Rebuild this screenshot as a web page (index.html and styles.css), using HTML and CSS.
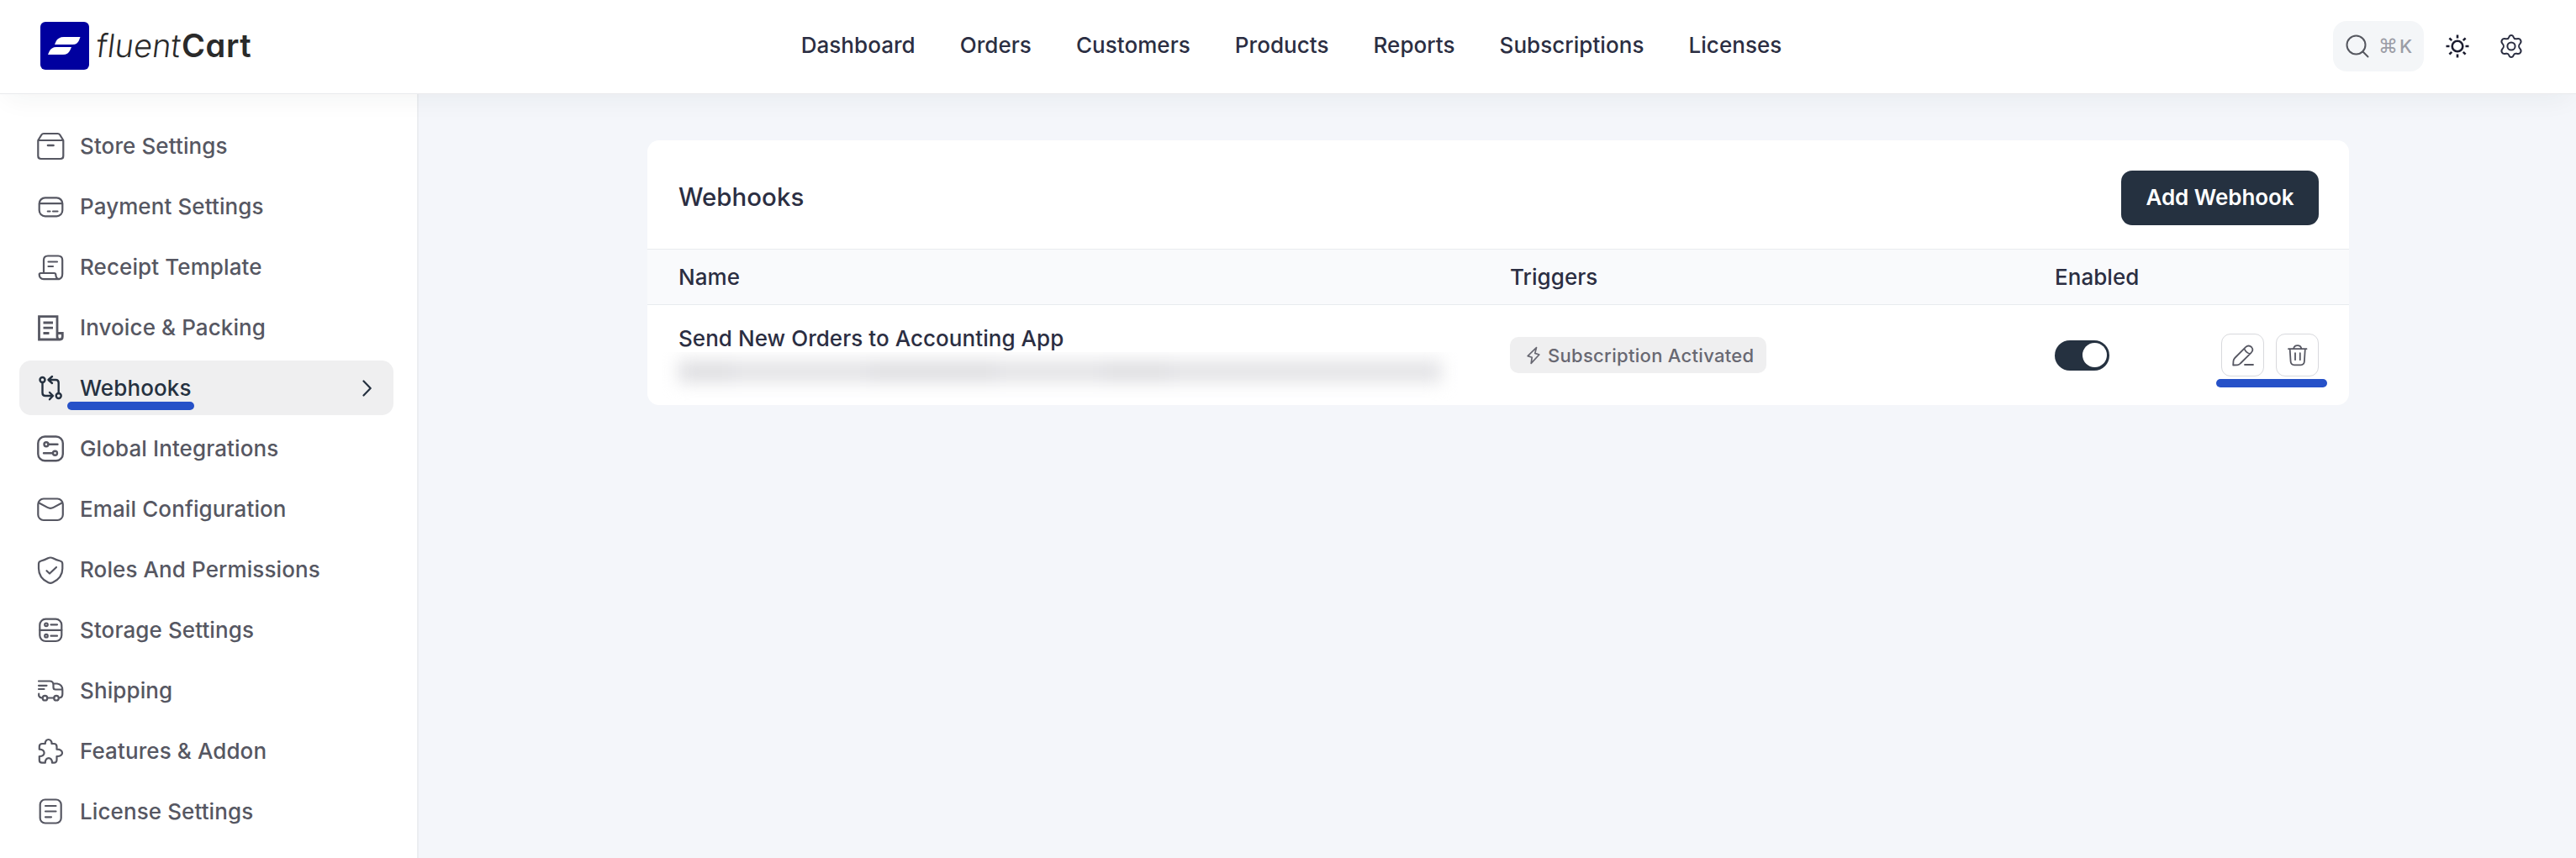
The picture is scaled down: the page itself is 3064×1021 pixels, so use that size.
FILE: index.html
```html
<!DOCTYPE html>
<html lang="en">
<head>
<meta charset="utf-8">
<title>FluentCart – Webhooks</title>
<link rel="stylesheet" href="styles.css">
</head>
<body>
<header class="topbar">
  <a class="logo">
    <svg class="logo-mark" viewBox="0 0 58 57"><rect width="58" height="57" rx="6" fill="#00009f"/><path fill="#fff" d="M28 18H47.500L46 22Q44 27 38.500 27H17L18.500 23.500Q21 18 28 18ZM19 30H37L35.500 33.500Q33 39 27 39H9L10.500 35.500Q13 30 19 30Z"/></svg>
    <span class="logo-text"><span class="logo-light">fluent</span><span class="logo-bold">Cart</span></span>
  </a>
  <nav class="mainnav">
    <a>Dashboard</a><a>Orders</a><a>Customers</a><a>Products</a><a>Reports</a><a>Subscriptions</a><a>Licenses</a>
  </nav>
  <div class="tools">
    <div class="search">
      <svg class="search-icon" viewBox="0 0 28 28"><circle cx="12.500" cy="12.500" r="11" /><path d="M20.500 20.500L26.500 26.500"/></svg>
      <span class="keys"><span class="cmd">⌘</span><span>K</span></span>
    </div>
    <svg class="sun" viewBox="0 0 28 28"><circle cx="14" cy="14" r="6.300"/><path d="M14 .5V4.500M14 23.500V27.500M.5 14H4.500M23.500 14H27.500M4.400 4.400L7.200 7.200M20.800 20.800L23.600 23.600M4.400 23.600L7.200 20.800M20.800 7.200L23.600 4.400"/></svg>
    <svg class="gear" viewBox="0 0 28 28"><circle cx="14" cy="14" r="4.600"/><path d="M11.300 3.200C11.800 1.600 12.600 1 14 1S16.200 1.600 16.700 3.200C17.200 4.800 18.700 5.600 20.300 5.200C22.800 4.500 24 4.600 25 6.400C26 8.200 26.100 9 24.700 10.600C22.300 13.200 22.300 14.800 24.700 17.400C26.100 19 26 19.800 25 21.600C24 23.400 22.800 23.500 20.300 22.800C18.700 22.400 17.200 23.200 16.700 24.800C16.200 26.400 15.400 27 14 27S11.800 26.400 11.300 24.800C10.800 23.200 9.300 22.400 7.700 22.800C5.200 23.500 4 23.400 3 21.600C2 19.800 1.900 19 3.300 17.400C5.700 14.800 5.700 13.200 3.300 10.600C1.900 9 2 8.200 3 6.400C4 4.600 5.200 4.500 7.700 5.200C9.300 5.600 10.800 4.800 11.300 3.200Z"/></svg>
  </div>
</header>

<div class="layout">
  <aside class="sidebar">
    <a class="item"><svg viewBox="0 0 36 36"><path d="M3.300 11V29.500Q3.300 33 6.800 33H30Q33.300 33 33.300 29.500V11ZM3.300 11L7.300 4.500Q8.200 3 10 3H26.600Q28.400 3 29.300 4.500L33.300 11"/><path class="thick" d="M15 17H21.500"/></svg>Store Settings</a>
    <a class="item"><svg viewBox="0 0 36 36"><rect x="4.700" y="7.300" width="27.600" height="22" rx="7"/><path d="M5 14.200H32M14.800 23.500H17.500M21 23.500H26.500"/></svg>Payment Settings</a>
    <a class="item"><svg viewBox="0 0 36 36"><path d="M10 24.500V9.500Q10 4.500 15 4.500H27.200Q32.200 4.500 32.200 9.500V26Q32.200 32.200 27 32.200H10Q4.700 32 4.700 26.500Q4.700 25 6.500 25H22.500Q24.200 25 24.300 26.800Q24.500 31.500 28 32.200M15.500 11.500H26M15.500 17H21"/></svg>Receipt Template</a>
    <a class="item"><svg class="bold" viewBox="0 0 36 36"><path d="M4.500 4.700H26V24.500H32.300V28.500Q32.300 32 29.300 32H4.500ZM26 24V29Q26.200 32 29.300 32M9.500 12H21M9.500 18.200H21M9.500 24.500H16.500"/></svg>Invoice &amp; Packing</a>
    <a class="item active"><svg class="mid" viewBox="0 0 36 36"><circle cx="8.500" cy="8" r="3"/><circle cx="27.700" cy="27" r="3"/><path d="M8.500 11V23.500Q8.500 27 12 27H20.500M17 23L21 27L17 31.300M27.700 24V11.500Q27.700 8 24.200 8H16M20 4L15.500 8L20 12"/></svg>Webhooks<svg class="chevron" viewBox="0 0 12 20"><path d="M1.500 1.500L9.700 10L1.500 18.500"/></svg><span class="marker marker-nav"></span></a>
    <a class="item"><svg class="mid" viewBox="0 0 36 36"><rect x="3.300" y="3.500" width="29.500" height="28.700" rx="8"/><circle cx="13" cy="12.700" r="2.500"/><path d="M15.500 12.700H26.500M10 23.200H20.500"/><circle cx="23.500" cy="23.200" r="2.500"/></svg>Global Integrations</a>
    <a class="item"><svg viewBox="0 0 36 36"><rect x="3.300" y="5.500" width="29.500" height="25.500" rx="6.500"/><path d="M4 10.200L14.500 15.900Q18 17.800 21.500 15.900L32 10.200"/></svg>Email Configuration</a>
    <a class="item"><svg viewBox="0 0 36 36"><path d="M18 3.500Q19.500 3.500 21 4.300Q25 6.500 29.500 7.500Q32.300 8.200 32.300 11V16.500C32.300 25 27.500 30 20.500 33.300Q18 34.500 15.500 33.300C8.500 30 4 25 4 16.500V11Q4 8.200 6.800 7.500Q11 6.500 15 4.300Q16.500 3.500 18 3.500ZM13.500 19.200L17 22.500L25 15"/></svg>Roles And Permissions</a>
    <a class="item"><svg viewBox="0 0 36 36"><rect x="5.300" y="4.700" width="26" height="26.300" rx="7"/><path d="M5.300 17.800H31.300M18.500 11.300H26M18.500 24.700H26"/><circle cx="13" cy="11.300" r="1.800"/><circle cx="13" cy="24.700" r="1.800"/></svg>Storage Settings</a>
    <a class="item"><svg viewBox="0 0 36 36"><path d="M4 6.500H17Q21.500 6.500 21.500 11V14Q21.500 16.500 24 16.500H31.500M4 11.800H13.500M4 16H10.500M21.500 9.500H26Q32.300 10.500 32.300 17V22Q32.300 26 28.500 26.500M22.500 26.500H14.500M4.200 21.500V24Q5 26 8 26.500"/><circle cx="11.500" cy="26.700" r="2.800"/><circle cx="25" cy="26.700" r="2.800"/></svg>Shipping</a>
    <a class="item"><svg viewBox="0 0 36 36"><path d="M11.800 9C11.400 2.300 19.800 2.300 19.500 9H22Q25.500 9 25.500 12.500V15.700C34.200 15.500 34.200 24.300 25.500 24V28Q25.500 31.700 22 31.700H20C20.300 24.300 11.500 24.300 11.800 31.700H8Q4.800 31.700 4.800 28.500V24C12.500 24.300 12.500 15.500 4.800 15.700V12.500Q4.800 9 8.300 9Z"/></svg>Features &amp; Addon</a>
    <a class="item"><svg viewBox="0 0 36 36"><rect x="5.700" y="3.500" width="25" height="28" rx="6"/><path d="M12 11H24.500M12 17.500H24.500M12 24.300H19"/></svg>License Settings</a>
  </aside>

  <main class="content">
    <section class="card">
      <div class="card-head"><h1>Webhooks</h1><button class="add">Add Webhook</button></div>
      <div class="row thead"><span>Name</span><span>Triggers</span><span>Enabled</span><span></span></div>
      <div class="row entry">
        <div class="name">
          <div>Send New Orders to Accounting App</div>
          <div class="redacted"><div class="smear"><i class="w1"></i><i class="w2"></i><i class="w3"></i><i class="w4"></i><i class="w5"></i><i class="w6"></i></div></div>
        </div>
        <div><span class="badge"><svg viewBox="0 0 16 22"><path d="M11.500 1.500L1.200 11.600L6.200 13.200L5.200 20.300L14.800 10L9.800 8.400Z"/></svg>Subscription Activated</span></div>
        <div><span class="toggle"></span></div>
        <div class="actions">
          <button class="icon-btn"><svg viewBox="0 0 26 26"><path d="M1.200 24.500L1.500 19.500Q1.700 17.500 3.200 16L16 3.200Q19.500 -.2 23 3Q26 6.500 22.500 9.800L9.800 22.500Q8.300 24.200 6.300 24.300ZM14.500 5Q16.500 9.800 21 11M15 24H25"/></svg></button>
          <button class="icon-btn"><svg viewBox="0 0 26 26"><path d="M2 5.200H23.500M3.700 5.500L4.600 20Q4.800 24.300 9 24.300H16.500Q20.700 24.300 20.900 20L21.800 5.500M8 5Q9 1.200 12.500 1.200H13Q16.500 1.200 17.500 5M10 10.200V18.200M15.800 10.200V18.200"/></svg></button>
          <span class="marker marker-actions"></span>
        </div>
      </div>
    </section>
  </main>
</div>
</body>
</html>
```
FILE: styles.css
```css
* { box-sizing: border-box; }
body {
  margin: 0;
  height: 1021px;
  overflow: hidden;
  display: flex;
  flex-direction: column;
  background: #f4f6fa;
  color: #2b2e42;
  font: 500 26px/32px Inter, "Liberation Sans", sans-serif;
  letter-spacing: 0.05px;
}
svg { display: block; flex: none; fill: none; stroke: currentColor; stroke-linecap: round; stroke-linejoin: round; }
button { font: inherit; letter-spacing: inherit; color: inherit; border: 0; padding: 0; }

.topbar {
  position: relative;
  z-index: 1;
  flex: none;
  height: 112px;
  padding: 0 40px 2px 48px;
  display: grid;
  grid-template-columns: 1fr auto 1fr;
  align-items: center;
  background: #fff;
  border-bottom: 1px solid #e9eaec;
  box-shadow: 0 12px 32px -8px rgba(40, 44, 52, .06);
}
.logo { display: flex; align-items: center; gap: 9px; }
.logo-mark { width: 58px; height: 57px; stroke: none; }
.logo-text { display: flex; gap: 2px; font-size: 38px; line-height: 57px; color: #2a2a2a; }
.logo-light { width: 99px; font-weight: 300; letter-spacing: 0; transform: skewX(-7deg); }
.logo-bold { font-weight: 600; font-feature-settings: "cv11"; letter-spacing: 0.6px; }
.mainnav { display: flex; gap: 53px; padding-bottom: 2px; }
.tools { display: flex; align-items: center; justify-content: flex-end; padding-right: 23px; }
.search { width: 108px; height: 60px; border-radius: 16px; background: #f4f6f8; display: flex; align-items: center; padding-left: 15px; gap: 13px; margin-right: 26px; }
.search-icon { width: 28px; height: 28px; color: #55575f; stroke-width: 2; }
.keys { display: flex; gap: 4px; font-size: 22px; font-weight: 500; color: #9b9da6; letter-spacing: 0; }
.cmd { width: 19px; display: flex; justify-content: center; font-family: "DejaVu Sans", sans-serif; font-size: 23px; }
.sun { width: 28px; height: 28px; stroke-width: 2.6; stroke-linecap: butt; color: #1c1d30; margin-right: 36px; }
.gear { width: 28px; height: 28px; stroke-width: 2; }

.layout { flex: 1; display: flex; min-height: 0; }
.sidebar {
  flex: none;
  width: 498px;
  padding: 29px 28px 0 23px;
  background: #fff;
  border-right: 2px solid #eceef1;
  display: flex;
  flex-direction: column;
  gap: 7px;
}
.item { position: relative; flex: none; height: 65px; padding: 1px 25px 0 19px; display: flex; align-items: center; gap: 17px; border-radius: 14px; color: #565762; letter-spacing: 0.1px; }
.item svg { width: 36px; height: 36px; stroke-width: 2.2; }
.item .thick { stroke-width: 2.6; }
.item svg.mid { stroke-width: 2.4; }
.item svg.bold { stroke-width: 2.8; stroke-linejoin: miter; stroke-linecap: butt; }
.active { background: #efeff0; color: #253140; }
.item svg.chevron { width: 12px; height: 20px; margin-left: auto; }
.marker { position: absolute; height: 10px; border-radius: 5px; background: #2651c8; }
.marker-nav { left: 57px; top: 49px; width: 151px; }

.content { flex: 1; padding: 55px 270px 0 272px; }
.card { background: #fff; border-radius: 14px; height: 315px; overflow: hidden; }
.card-head { height: 129px; padding: 7px 36px 0 37px; display: flex; align-items: center; justify-content: space-between; }
h1 { margin: 0; font-size: 29.400px; font-weight: 500; line-height: 36px; }
.add { width: 235px; height: 65px; border-radius: 13px; background: #253140; color: #fff; font-weight: 600; letter-spacing: -0.05px; }
.row { display: grid; grid-template-columns: 989px 648px 198px 1fr; padding: 0 36px 0 37px; align-items: center; }
.thead { height: 67px; background: #f9fafc; border: solid #e8ebee; border-width: 1px 0; }
.entry { height: 119px; }
.name { align-self: start; padding-top: 24px; }
.redacted { overflow: hidden; height: 58px; margin-left: -30px; padding: 10px 0 0 30px; }
.smear { display: flex; height: 26px; filter: blur(10px); }
.smear i { background: #dedee1; }
.smear i:nth-child(even) { background: #e3e3e6; }
.w1 { width: 64px; }
.w2 { width: 164px; }
.w3 { width: 150px; }
.w4 { width: 127px; }
.w5 { width: 79px; }
.w6 { width: 324px; }
.badge { width: 305px; height: 43px; border-radius: 10px; background: #efeff0; color: #686872; font-size: 22px; letter-spacing: 0.3px; display: flex; align-items: center; padding-left: 20px; gap: 9px; white-space: nowrap; }
.badge svg { width: 16px; height: 22px; stroke-width: 1.7; }
.toggle { display: block; width: 65px; height: 36px; padding: 3.500px; border-radius: 18px; background: #253140; }
.toggle::after { content: ""; display: block; width: 29px; height: 29px; margin-left: auto; border-radius: 50%; background: #fff; }
.actions { position: relative; display: flex; gap: 14px; }
.icon-btn { width: 51px; height: 51px; border: 1px solid #d8d9dd; border-radius: 11px; background: #fff; color: #565762; display: grid; place-items: center; }
.icon-btn svg { width: 26px; height: 26px; stroke-width: 1.8; }
.marker-actions { left: -6px; top: 54px; width: 132px; }
```
